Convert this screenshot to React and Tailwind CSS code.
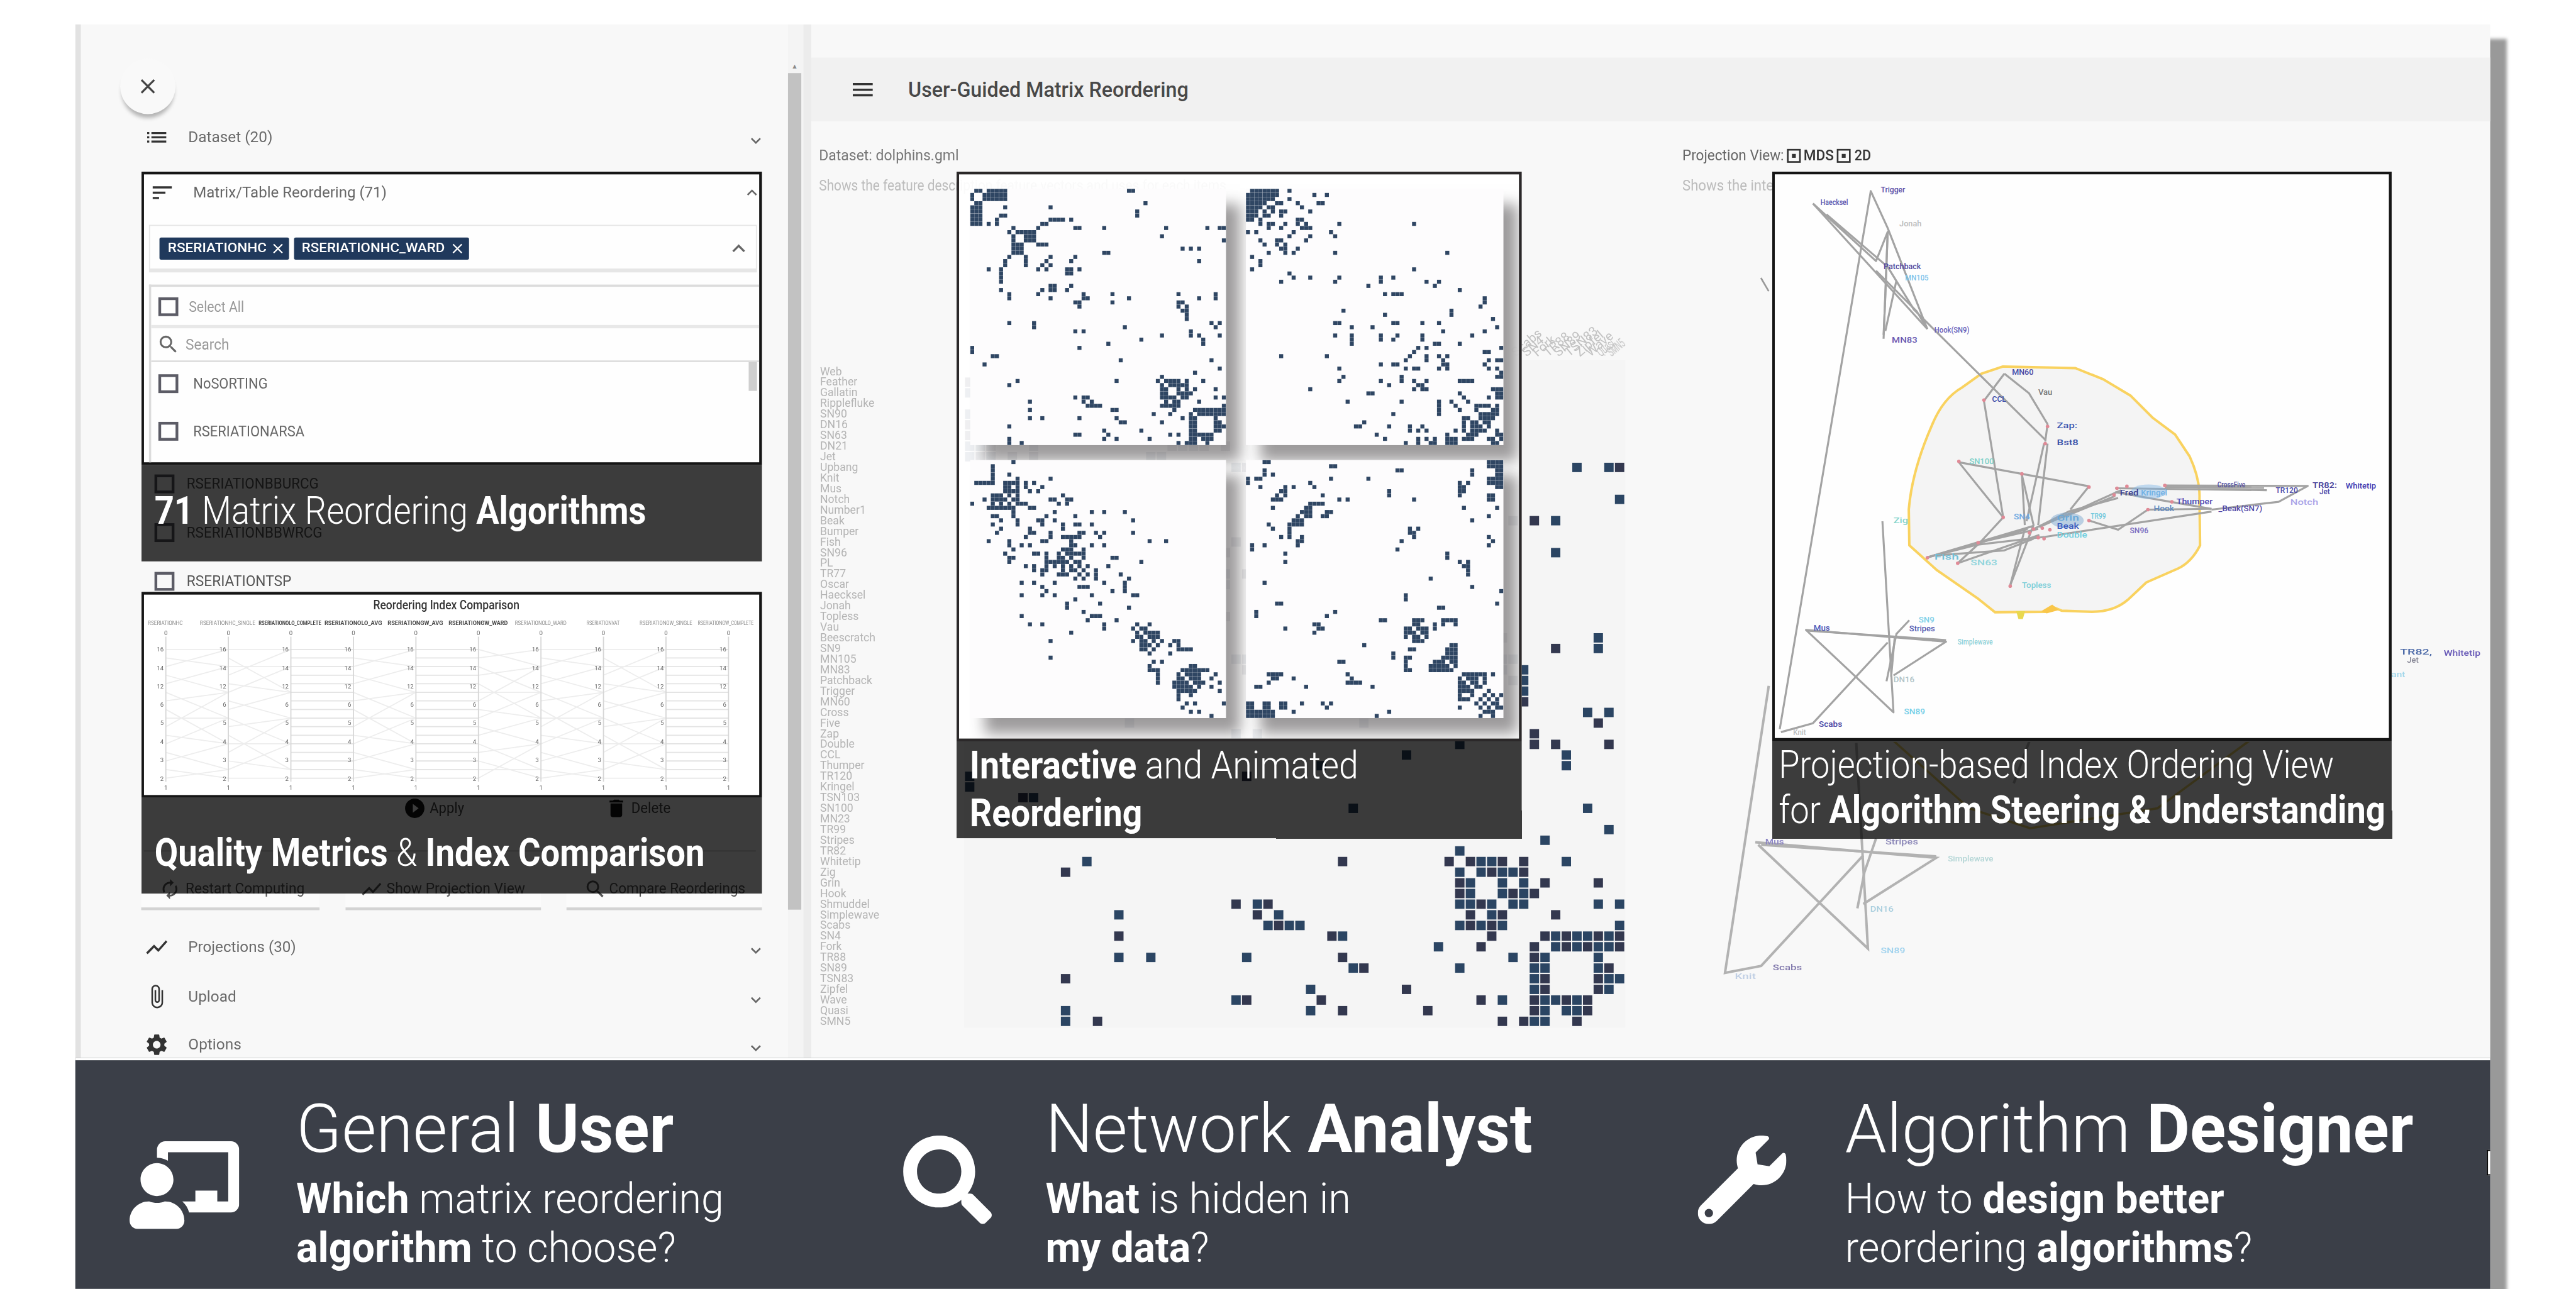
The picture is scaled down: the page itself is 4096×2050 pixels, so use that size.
import React, { useLayoutEffect, useRef, useState } from "react";
import { FaChalkboardTeacher, FaSearch, FaWrench } from "react-icons/fa";
import {
  MdClose, MdList, MdSort, MdSearch, MdPlayCircleFilled, MdDelete, MdAutorenew,
  MdShowChart, MdAttachFile, MdSettings, MdMenu, MdKeyboardArrowDown, MdKeyboardArrowUp,
} from "react-icons/md";

/* Single line of text condensed or expanded to an exact width. */
function Fit({ w, className = "", children }) {
  const ref = useRef(null);
  const [k, setK] = useState(1);
  useLayoutEffect(() => {
    setK(w / ref.current.offsetWidth);
  }, [w]);
  return (
    <span className={"block whitespace-nowrap " + className} style={{ width: w }}>
      <span ref={ref} className="inline-block origin-left" style={{ transform: `scaleX(${k})` }}>
        {children}
      </span>
    </span>
  );
}

/* ---------- adjacency matrices ---------- */
// "row:cols" entries; a-b is a range
const parse = (s) =>
  s.trim().split(/\s+/).flatMap((part) => {
    const [r, cs] = part.split(":");
    const span = (t) => {
      const [a, b] = t.split("-").map(Number);
      return Array.from({ length: (b ?? a) - a + 1 }, (_, i) => a + i);
    };
    return span(r).flatMap((row) => cs.split(",").flatMap(span).map((c) => [c, row]));
  });

const mirror = (cells) => {
  const seen = new Set();
  cells.forEach(([c, r]) => {
    seen.add(c * 62 + r);
    seen.add(r * 62 + c);
  });
  return [...seen].map((v) => [Math.floor(v / 62), v % 62]);
};

const A = mirror(parse(`
 1:0 2:0 3:1,2 4-8:0-2 8:4 7:6 8:6 19:4,7 20-22:7 24:7 17:8 18:8 16:9 10:9 25:9 26:9 32:9,15 47:9 46:11 57:9 60:9 61:9,12
 51:14 53:14 55:14,17 33:15 38:0 39:0 40:5,6 42:3 11:10 12:10,13 13:10-12 14:10-12 15:10-12 10:14 16-18:13 19:16 18:17 19:18
 25:16 24:17 23:19,20 24:19,20,23 26:19,27 27:25,26 28:26 34:25,27 38:26 50:25,27,28 51:27,29 52:28-31 37:33 41:36 46:35
 55:26 53:34,35 55:35 56:36,37 59:25,26 58:32 59:33 60:32,35 58:41 60:43
 9:60,61 12:61 14:53,55 17:55 28-31:52 60:58
 46:45,47-50,52,56 47:46,48-52 48:46,47,50,52,54,59 49:46,47,50-53 50:46-49,51,52,59,61 51:47,49,50,55 52:46-50,61
 53:49,54-61 54:44,48,53,55-61 55:51,53,54,59 56:46,53,54,59,60 57:53,54,59-61 58:53,54,59 59:48,50,53-58 60:53,54,56,57 61:50,52-54,57`));

const B = mirror(parse(`
 1:0,1 2-7:0,1 2-6:2 2-4:3 8:3,5,6 9:8 10:0,2,11 9:5 12:3,8 13:4,7 15:5 16:1 17:3 18:3 19:1 14:8,9 15:9,11 14:12 20:10 21:11,15
 22:8,21 5:4 6:4,5 7:3 12:7 13:9 40:8,19 48:15 43:22 46:22 45:23 51:24 32:21,22 35:21 33:25 35-37:25 23:29 33:30 35:32 36:32,35
 57:26,27 56:28 49:29,30 42:32,35,36 46:32 47:34 45:37 46:37 43:38 51:37 54:35 57:34 59:31 60:33 61:38 57:39 58:39,41 41:38
 40:39 43:40 46:40 48:40,42 47:41 57:42 60:41,43,45 61:41,44,45 58:43 51-54:46 41:43,47 43:46,48 42:47 40:48
 59-61:48 60:49,50 61:49,50 58:50 51:49 52:50 53:51 55-58:52 56-58:54 60:53,54 56-59:55 57:56 58:56,57 59:53 55:53,56,57 56:57
 54:58,59 55:58 52:60 60:59,58 61:60,59 53:60`));

const C = mirror(parse(`
 10:0 5:1-4 5:5 0:10 9:3,5-8 8:5,6 10:5,7 11:4-9 10:9,11 7:8,9 6:9 5:10 11:10 8:9 13:5,6,10 14:11,7 15:5,11 16:7,14 17:6,14,15 12:10
 19:4,9 20:9,12,14 21:10 22:8,15,16 23:9,10 24:9 18:13 25:13,15 26:15,17 19:17,18 29:12,15,20 32:12,17,20 30:17 31:18 37:12 39:14,17
 43:19 47:19 41:24 34:23 35:23 33:25 36:27 38:28 34:31 24:18-22 25:18 27:17 26:18 23:18,21,22 27:21-23 26:22,24 25:22,24 26:25 22:21
 28:25 27:26 24:23 30:27,28,26 32:29 27:30 37:29-31 39:32 40:32 38:35 21:24 20:25 28:27 18:22,23
 40:39 41:40 43:39,41,42 44:41-43 42:40 45:42,41 46:43 45:44 42:41 49:43 48:44,46 50:43,45,44 51-53:45
 53:49-52 54:49-51 52:50,51 55:50-54 54:53 51:50,52 52:53 51-53:54 56:53,50 57:50 59:51 58:52,54 60:53,55 61:58 53:60 55:60 58:61 52:58 51:59`));

const D = mirror(parse(`
 4:0,2,3 5:0 0:4,5 2:4 3:4,6 6:3 9:6,7 11:6 8:7,9 15:5,10-13 16:6,10 17:10 18:10,8,13 14:11-13 12:13,14 19:12,13 20:12,1 22:9 24:9 21:1
 20:4 29:4 34:7,8 36:2,21 37:2,19 40:9,17,18 39:16,17 41:16 44:28 48:22,23 51:24 52:25 53:24-27 54:30,2,3 51:5-8 52:6,7,11 53:5 54:14
 58-61:0,1 60:2,3 61:2,3 58:4,5 59:4,5 60:4-6 61:4-6 58:8,9,13,18,20 59:8,9,19 60:11,34 61:31 46:35 47:35 32:38 33:38 47-50:38 47:39 50:39
 45:39,40 40:38,39 41:38 42:38,41 43:40,42 41:40,43,39 42:40 49:44 50:44-49 48-50:45 48-50:46 47-50:47 49:48
 52-57:51 57:52,53,58 53:52,54 54:52 55:54,53,52 54:56 54:53 51:54-56 59:51,56 56:57 58:55 61:56 60:57,59 61:59 60:58 56:59,61 58:59`));

function Cells({ cells, size = 10, fill = "#2f4663" }) {
  return cells.map(([c, r]) => (
    <rect key={c + "-" + r} x={c * size} y={r * size} width={size - 0.3} height={size - 0.3} fill={fill} />
  ));
}

function MiniMatrix({ cells }) {
  return (
    <div className="h-full w-full bg-[#fdfcfd] shadow-[26px_28px_24px_rgba(60,55,58,0.5)]">
      <svg viewBox="0 0 620 620" preserveAspectRatio="none" className="block h-full w-full">
        <Cells cells={cells} />
      </svg>
    </div>
  );
}

const NAMES = `Web Feather Gallatin Ripplefluke SN90 DN16 SN63 DN21 Jet Upbang Knit Mus Notch Number1 Beak Bumper Fish SN96 PL TR77 Oscar Haecksel Jonah Topless Vau Beescratch SN9 MN105 MN83 Patchback Trigger MN60 Cross Five Zap Double CCL Thumper TR120 Kringel TSN103 SN100 MN23 TR99 Stripes TR82 Whitetip Zig Grin Hook Shmuddel Simplewave Scabs SN4 Fork TR88 SN89 TSN83 Zipfel Wave Quasi SMN5`.split(" ");

function BackgroundMatrix() {
  return (
    <svg viewBox="1480 560 1500 1320" className="block h-[1320px] w-[1500px] font-['Roboto']">
      <rect x="1742" y="650" width="1194" height="1206" fill="#f5f5f5" />
      <g fontSize="20" fill="#b4b4b4">
        {NAMES.map((n, i) => (
          <text key={n} x="1482" y={677.5 + i * 19.24}>{n}</text>
        ))}
      </g>
      <g fontSize="23" fill="#c2c2c2">
        {NAMES.map((n, i) =>
          i < 52 ? null : (
            <text key={n} transform={`translate(${1738 + i * 19.24} 645) rotate(-40)`} textLength={i > 59 ? 34 : undefined} lengthAdjust="spacingAndGlyphs">{n}</text>
          )
        )}
      </g>
      <g transform="translate(1742.5 661.5) scale(1.924)">
        {A.map(([c, r]) => (
          <rect key={c + "-" + r} x={c * 10 + 0.6} y={r * 10 + 0.6} width="8.8" height="8.8" fill={(c * 7 + r) % 5 < 2 ? "#33384f" : "#2b4563"} />
        ))}
      </g>
    </svg>
  );
}

/* ---------- parallel index comparison ---------- */
const AX = Array.from({ length: 10 }, (_, i) => 299.5 + i * 112.9);
const TICKS = [1173, 1206.5, 1239.5, 1272.5, 1306, 1339, 1373, 1406];
const HEADS = ["RSERIATIONHC", "RSERIATIONHC_SINGLE", "RSERIATIONOLO_COMPLETE", "RSERIATIONOLO_AVG", "RSERIATIONGW_AVG", "RSERIATIONGW_WARD", "RSERIATIONOLO_WARD", "RSERIATIONVAT", "RSERIATIONGW_SINGLE", "RSERIATIONGW_COMPLETE"];
const HEAD_X = [[267, 330], [361, 461], [467, 580], [586, 690], [700, 800], [810, 917], [930, 1023], [1059, 1119], [1155, 1250], [1260, 1361]];
const FLAT = [false, false, true, false, true, false, false, false, true];

function ParallelChart() {
  return (
    <svg viewBox="260 1074 1111 362" className="block h-[362px] w-[1111px] font-['Roboto']">
      <text x="806" y="1101" fontSize="24" fontWeight="500" fill="#333" textAnchor="middle" textLength="264" lengthAdjust="spacingAndGlyphs">Reordering Index Comparison</text>
      {HEADS.map((h, i) => (
        <text key={h} x={HEAD_X[i][0]} y="1129" fontSize="10.5" fontWeight={i > 1 && i < 6 ? 700 : 400} fill={i > 1 && i < 6 ? "#444" : "#888"} textLength={HEAD_X[i][1] - HEAD_X[i][0]} lengthAdjust="spacingAndGlyphs">{h}</text>
      ))}
      {FLAT.map((flat, i) =>
        Array.from({ length: 16 }, (_, j) => {
          const y = 1173 + j * 15.5;
          const shift = ((j * 5 + i * 3) % 9) - 4;
          const y2 = flat ? y : 1173 + Math.min(15, Math.max(0, j + shift)) * 15.5;
          return (
            <line key={i + "-" + j} x1={AX[i]} y1={y} x2={AX[i + 1]} y2={y2} stroke={flat ? "#e3e3e3" : "#ededed"} strokeWidth="2" />
          );
        })
      )}
      {AX.map((x, i) => (
        <g key={x}>
          <line x1={x} x2={x} y1="1150" y2="1412" stroke="#d6d6d6" strokeWidth="2" />
          <text x={x} y="1147" fontSize="11" fill="#666" textAnchor="middle">0</text>
          <text x={x} y="1427" fontSize="11" fill="#666" textAnchor="middle">1</text>
          {TICKS.map((y, j) => (
            <text key={y} x={x - 4} y={y + 4} fontSize="11" fill="#666" textAnchor="end">{j < 3 ? 16 - j * 2 : 9 - j}</text>
          ))}
        </g>
      ))}
    </svg>
  );
}

/* ---------- projection graph ---------- */
const P = (x, y) => [3000 + 1.0536 * x, 240 + 0.7015 * y];
const Q = (x, y) => [3000 + 1.0536 * x, 1300 + 0.3827 * y];
const poly = (f, list) => list.map((p) => f(p[0], p[1]).map((v) => v.toFixed(1)).join(",")).join(" ");

const LINES = [
  [[205, 1535], [361, 150], [390, 245], [458, 505]],
  [[262, 182], [370, 330], [390, 255], [383, 530]],
  [[262, 182], [458, 505]], [[285, 210], [390, 345], [435, 455], [660, 790]],
  [[390, 255], [386, 420], [383, 520]], [[405, 380], [386, 510]], [[370, 355], [440, 460], [458, 505]],
  [[590, 620], [555, 690], [588, 990]], [[590, 620], [632, 670], [664, 750], [660, 795]],
  [[658, 800], [628, 1000]], [[664, 800], [648, 1010]],
  [[512, 848], [588, 990], [548, 1055], [630, 1020]], [[512, 848], [620, 878], [735, 910], [703, 970]],
  [[620, 878], [625, 1010]], [[620, 880], [640, 1010], [600, 1165]], [[600, 1165], [625, 1020]],
  [[780, 935], [690, 990]], [[790, 920], [650, 1015]], [[785, 940], [700, 975], [640, 1020]],
  [[735, 998], [785, 1022], [836, 970], [945, 968]], [[945, 975], [660, 1040], [545, 1060], [458, 1093]],
  [[458, 1093], [640, 1012]], [[458, 1093], [560, 1050], [648, 1020]], [[510, 1108], [548, 1055]], [[510, 1108], [650, 1035]], [[470, 1088], [590, 1075], [640, 1045]],
  [[865, 908], [1110, 909], [1060, 950], [945, 970]], [[780, 915], [1040, 920]], [[780, 925], [875, 950], [945, 968]], [[865, 912], [1035, 914]],
  [[381, 1000], [400, 1492], [250, 1280], [490, 1310], [400, 1397]], [[255, 1282], [490, 1306]], [[427, 1255], [405, 1290], [388, 1412]],
  [[390, 1312], [262, 1520], [207, 1543]], [[402, 1300], [396, 1400]],
];
const LABELS = [
  ["Trigger", 378, 153, 42, "#5a50a8"], ["Haecksel", 275, 186, 47, "#5a50a8"], ["Jonah", 410, 240, 38, "#bbb"], ["Patchback", 383, 350, 64, "#4c48a0"],
  ["MN105", 420, 380, 40, "#79c4ec"], ["Hook(SN9)", 470, 514, 60, "#6a60b8"], ["MN83", 397, 540, 44, "#6a58b0"], ["MN60", 603, 622, 37, "#4a4aa4"],
  ["Vau", 648, 675, 24, "#777"], ["CCL", 569, 692, 24, "#3b4aa8"], ["Zap:", 680, 760, 35, "#3a55b0"], ["Bst8", 680, 804, 37, "#3a50a8"],
  ["SN100", 530, 852, 42, "#7ed0c8"], ["SN4", 606, 995, 28, "#6fa8e0"], ["Fred", 788, 934, 32, "#3b3d90"], ["Kringel", 824, 934, 45, "#6fb0e4"],
  ["Thumper", 885, 956, 62, "#4b48b4"], ["Hook", 846, 974, 35, "#6088c0"], ["Beak", 680, 1019, 38, "#3c5cc0"], ["Grin", 680, 998, 38, "#68a8d8"],
  ["Double", 680, 1042, 52, "#70cfe0"], ["SN96", 805, 1030, 32, "#7a6cc0"], ["TR99", 738, 994, 26, "#70c8dc"], ["Fish", 470, 1098, 42, "#6fc0d8"],
  ["SN63", 532, 1114, 46, "#90d4dc"], ["Topless", 620, 1171, 50, "#7fcfd8"], ["CrossFive", 955, 912, 48, "#5550a0"], ["TR120", 1055, 927, 38, "#4a48a8"],
  ["Jet", 1130, 930, 18, "#4a48a8"], ["TR82:", 1118, 914, 42, "#443c98"], ["Whitetip", 1175, 916, 52, "#443cb0"], ["Notch", 1080, 958, 48, "#a8a4e8"],
  ["_Beak(SN7)", 957, 974, 75, "#5048a8"], ["Zig", 400, 1005, 25, "#86d4cc"], ["SN9", 443, 1260, 27, "#80d0e8"], ["Stripes", 427, 1283, 44, "#5058b0"],
  ["Mus", 263, 1282, 28, "#5058b8"], ["DN16", 400, 1415, 36, "#b0c4c8"], ["Simplewave", 510, 1317, 60, "#8cd0d8"], ["SN89", 418, 1497, 36, "#74cfe8"],
  ["Scabs", 272, 1530, 40, "#4c48a4"], ["Knit", 228, 1550, 22, "#bbb"],
];
const DOTS = [[555, 688], [664, 756], [660, 800], [512, 846], [620, 878], [735, 912], [783, 915], [778, 932], [800, 910], [865, 908], [877, 950], [836, 970], [588, 990], [640, 1020], [655, 1018], [668, 1022], [633, 1030], [545, 1055], [648, 1042], [658, 1045], [735, 998], [510, 1108], [458, 1094], [600, 1167]];

const LASSO = "M3619 662 L3660 663 L3750 665 L3800 685 L3850 715 L3890 755 L3930 785 L3956 824 Q3975 865 3974 900 L3975 985 Q3960 1015 3935 1027 L3878 1052 L3845 1083 Q3820 1105 3780 1105 L3725 1103 L3708 1096 L3695 1105 L3605 1106 L3575 1082 L3500 1030 L3450 985 L3449 920 Q3455 850 3490 770 Q3510 720 3545 700 L3580 675 Z";

function Tag({ f, t }) {
  const [x, y] = f(t[1], t[2]);
  return (
    <text x={x} y={y} fontSize="14.5" fontWeight="500" fill={t[4]} textLength={t[3] * 1.0536} lengthAdjust="spacingAndGlyphs">{t[0]}</text>
  );
}

function ProjectionGraph() {
  return (
    <svg viewBox="3207 315 1109 1018" className="block h-[1018px] w-[1109px] font-['Roboto']">
      <path d={LASSO} fill="#f4f4f4" stroke="#f9d25f" strokeWidth="4.5" strokeLinejoin="round" />
      <path d="M3643 1104h16l-4 14h-8z" fill="#e9d84e" />
      <path d="M3688 1104l20-12 12 10-22 6z" fill="#f9c64a" />
      {LINES.map((l, i) => (
        <polyline key={i} points={poly(P, l)} fill="none" stroke="#a3a3a3" strokeWidth="3.6" strokeLinejoin="round" />
      ))}
      <ellipse cx="3735" cy="940" rx="30" ry="14" fill="#7fa9cf" opacity=".5" />
      <ellipse cx="3882" cy="888" rx="32" ry="13" fill="#7fb6e6" opacity=".45" />
      {DOTS.map(([x, y], i) => {
        const p = P(x, y);
        return <circle key={i} cx={p[0]} cy={p[1]} r="3.2" fill="#e08a96" />;
      })}
      {LABELS.map((t) => <Tag key={t[0]} f={P} t={t} />)}
    </svg>
  );
}

const BACK_LINES = [
  [[188, -160], [113, 1195], [175, 1162], [350, 640]], [[165, 578], [475, 652], [350, 870]], [[175, 590], [475, 645]],
  [[170, 590], [358, 1080], [338, 110]], [[372, 560], [352, 720], [340, 890]], [[635, 100], [608, 300]],
];
const BACK_TAGS = [
  ["Mus", 182, 590, 32, "#8a83c4"], ["Stripes", 388, 588, 56, "#8c88b8"], ["Simplewave", 495, 670, 78, "#b4d6d6"], ["DN16", 362, 905, 40, "#a8cede"],
  ["SN89", 380, 1102, 42, "#9fd2ee"], ["Scabs", 195, 1182, 50, "#8078ac"], ["Knit", 130, 1225, 36, "#c0cfe4"],
];

function BackgroundGraph() {
  return (
    <svg viewBox="3000 420 1496 1480" className="block h-[1480px] w-[1496px] font-['Roboto']">
      <path d="M3184 502l14 24" stroke="#999" strokeWidth="3" />
      {BACK_LINES.map((l, i) => (
        <polyline key={i} points={poly(Q, l)} fill="none" stroke="#b2b2b2" strokeWidth="4.5" />
      ))}
      <path d="M3420 1335L3560 1460L3670 1496L3900 1460L4070 1335" fill="none" stroke="#e9cf6a" strokeWidth="4" />
      {BACK_TAGS.map((t) => <Tag key={t[0]} f={Q} t={t} />)}
      {[["TR82,", 1270, 1344, 55, "#4c6aa8"], ["Whitetip", 1345, 1346, 63, "#6a5cb8"], ["Jet", 1282, 1364, 20, "#8a8a98"], ["ant", 1255, 1402, 24, "#9fd6ea"]].map((t) => (
        <Tag key={t[0]} f={P} t={t} />
      ))}
    </svg>
  );
}

/* ---------- sidebar ---------- */
function Section({ icon: Icon, label, w, h }) {
  return (
    <div className={"flex shrink-0 items-center " + h}>
      <div className="ml-[124px] w-[80px] text-[46px] text-[#333]"><Icon /></div>
      <Fit w={w} className="text-[28px] text-[#6a6a6a]">{label}</Fit>
      <MdKeyboardArrowDown className="mr-[40px] ml-auto mt-3 text-[36px] text-[#666]" />
    </div>
  );
}

function Box() {
  return <span className="block h-[34px] w-[36px] shrink-0 border-[5px] border-[#5c5c66]" />;
}

function Option({ label, w }) {
  return (
    <div className="flex h-[88px] shrink-0 items-center pl-[143px]">
      <Box />
      <Fit w={w} className="ml-[22px] text-[28px] text-[#555]">{label}</Fit>
    </div>
  );
}

function Sidebar() {
  return (
    <div className="flex h-full w-[1287px] shrink-0 flex-col overflow-hidden border-l-[10px] border-[#e2e2e2] pl-0 [&>*]:-ml-[10px]">
      <div className="mt-[62px] flex h-[100px] shrink-0 pl-[81px]">
        <div className="flex h-[100px] w-[100px] items-center justify-center rounded-full bg-[#f9f9f9] text-[44px] text-[#444] shadow-[0_10px_7px_-3px_rgba(0,0,0,0.28)]">
          <MdClose />
        </div>
      </div>
      <Section icon={MdList} label="Dataset (20)" w={152} h="h-[84px]" />
      <div className="h-[540px] shrink-0" />
      <Option label="RSERIATIONBBURCG" w={239} />
      <Option label="RSERIATIONBBWRCG" w={245} />
      <Option label="RSERIATIONTSP" w={189} />
      <div className="h-[336px] shrink-0" />
      <div className="flex h-[60px] shrink-0 items-center pl-[592px] text-[27px] text-[#444]">
        <MdPlayCircleFilled className="text-[42px] text-[#111]" />
        <Fit w={62} className="ml-[6px]">Apply</Fit>
        <MdDelete className="ml-[254px] text-[42px] text-[#111]" />
        <Fit w={71} className="ml-[6px]">Delete</Fit>
      </div>
      <div className="flex h-[48px] shrink-0 pl-[124px]">
        <div className="w-[1105px] border-b-2 border-[#ccc]" />
      </div>
      <div className="mt-[34px] flex h-[72px] shrink-0 pl-[119px] text-[27px] text-[#555]">
        <div className="flex w-[322px] items-center border-b-[5px] border-[#d3d3d3] bg-[#fbfbfb] pl-[32px]">
          <MdAutorenew className="mr-[8px] text-[40px]" /><Fit w={215}>Restart Computing</Fit>
        </div>
        <div className="ml-[47px] flex w-[353px] items-center border-b-[5px] border-[#d3d3d3] bg-[#fbfbfb] pl-[26px]">
          <MdShowChart className="mr-[6px] text-[42px]" /><Fit w={250}>Show Projection View</Fit>
        </div>
        <div className="ml-[46px] flex w-[353px] items-center border-b-[5px] border-[#d3d3d3] bg-[#fbfbfb] pl-[31px]">
          <MdSearch className="mr-[4px] text-[42px]" /><Fit w={246}>Compare Reorderings</Fit>
        </div>
      </div>
      <div className="h-[22px] shrink-0" />
      <Section icon={MdShowChart} label="Projections (30)" w={195} h="h-[89px]" />
      <Section icon={MdAttachFile} label="Upload" w={87} h="h-[89px]" />
      <Section icon={MdSettings} label="Options" w={96} h="h-[86px]" />
    </div>
  );
}

function Scrollbar() {
  return (
    <div className="flex h-full w-[42px] shrink-0 border-r-[14px] border-[#ececec] bg-[#f4f4f4]">
      <div className="flex w-[24px] flex-col">
        <div className="mt-[64px] flex h-[24px] items-center justify-center text-[12px] text-[#888]">▲</div>
        <div className="h-[1511px] bg-[#c2c2c2]" />
      </div>
    </div>
  );
}

function Radio() {
  return (
    <span className="flex h-[25px] w-[25px] items-center justify-center border-[3px] border-[#333]">
      <span className="h-[7px] w-[7px] bg-[#333]" />
    </span>
  );
}

function Workspace() {
  return (
    <div className="flex h-full w-[3033px] flex-col">
      <div className="mt-[60px] flex h-[115px] shrink-0 items-center bg-[#f1f1f1] pl-[69px]">
        <MdMenu className="text-[48px] text-[#333]" />
        <Fit w={506} className="ml-[58px] pt-[2px] text-[37px] font-medium text-[#484848]">User-Guided Matrix Reordering</Fit>
      </div>
      <div className="flex">
        <div className="w-[1534px] pl-[14px]">
          <Fit w={252} className="mt-[42px] h-[40px] text-[27px] leading-[40px] text-[#777]">Dataset: dolphins.gml</Fit>
          <Fit w={735} className="mt-[14px] h-[40px] text-[27px] leading-[40px] text-[#bcbcbc]">Shows the feature description feature vectors and uses for each items</Fit>
          <div className="mt-[205px]"><BackgroundMatrix /></div>
        </div>
        <div className="w-[1499px]">
          <div className="mt-[42px] flex h-[40px] items-center gap-[5px] pl-[39px] text-[27px] font-medium text-[#333]">
            <Fit w={184} className="font-normal text-[#666]">Projection View:</Fit>
            <Radio /><Fit w={55}>MDS</Fit>
            <span><Radio /></span><Fit w={30} className="ml-[2px]">2D</Fit>
          </div>
          <Fit w={240} className="mt-[14px] ml-[39px] h-[40px] text-[27px] leading-[40px] text-[#bcbcbc]">Shows the interactive</Fit>
          <div className="-ml-[3px] mt-[65px]"><BackgroundGraph /></div>
        </div>
      </div>
    </div>
  );
}

/* ---------- highlighted panels ---------- */
function AlgorithmsPanel() {
  return (
    <div className="absolute top-[310px] left-[255px] flex h-[704px] w-[1121px] flex-col text-[28px] text-[#666]">
      <div className="flex h-[530px] flex-col overflow-hidden border-[5px] border-[#151515] bg-[#fefefe] [&>*]:shrink-0">
        <div className="flex h-[66px] items-center pl-[10px]">
          <MdSort className="text-[46px] text-[#333]" />
          <Fit w={349} className="ml-[33px]">Matrix/Table Reordering (71)</Fit>
          <MdKeyboardArrowUp className="-mr-[5px] ml-auto text-[36px]" />
        </div>
        <div className="mt-[25px] ml-[9px] flex h-[86px] w-[1098px] items-center gap-[9px] border-2 border-b-[7px] border-[#e6e6e6] pr-[8px] pl-[17px] pt-[4px] text-[23px] font-medium text-white">
          <span className="flex h-[40px] w-[234px] items-center rounded-[3px] bg-[#20395c] pl-[15px]"><Fit w={178}>RSERIATIONHC</Fit><MdClose className="ml-[6px] text-[30px]" /></span>
          <span className="flex h-[40px] w-[316px] items-center rounded-[3px] bg-[#20395c] pl-[14px]"><Fit w={258}>RSERIATIONHC_WARD</Fit><MdClose className="ml-[8px] text-[30px]" /></span>
          <MdKeyboardArrowUp className="ml-auto text-[46px] text-[#666]" />
        </div>
        <div className="mt-[22px] ml-[9px] w-[1102px] border-t-4 border-l-[4px] border-[#dcdcdc]">
          <div className="flex h-[75px] items-center border-b-[6px] border-[#e8e8e8] pt-[2px] pl-[13px]">
            <Box /><Fit w={100} className="ml-[19px] text-[#999]">Select All</Fit>
          </div>
          <div className="flex h-[61px] items-center border-b-[3px] border-[#dcdcdc] pl-[10px]">
            <MdSearch className="text-[42px]" /><Fit w={79} className="ml-[10px] text-[#999]">Search</Fit>
          </div>
          <div className="flex h-[200px] justify-between">
            <div>
              <div className="mt-[3px] flex h-[72px] items-center pl-[13px]"><Box /><Fit w={134} className="ml-[27px]">NoSORTING</Fit></div>
              <div className="mt-[14px] flex h-[72px] items-center pl-[13px]"><Box /><Fit w={201} className="ml-[27px]">RSERIATIONARSA</Fit></div>
            </div>
            <div className="mr-[4px] h-[52px] w-[15px] bg-[#cfcfcf]" />
          </div>
        </div>
      </div>
      <div className="h-[174px] bg-black/76 pl-[24px] text-white">
        <Fit w={888} className="h-[164px] text-[70px] leading-[164px] font-light"><b className="font-bold">71</b> Matrix Reordering <b className="font-bold">Algorithms</b></Fit>
      </div>
    </div>
  );
}

function MetricsPanel() {
  return (
    <div className="absolute top-[1069px] left-[255px] flex h-[545px] w-[1121px] flex-col">
      <div className="h-[372px] border-[5px] border-[#151515] bg-white"><ParallelChart /></div>
      <div className="h-[173px] bg-black/76 pl-[24px] text-white">
        <Fit w={993} className="h-[198px] text-[70px] leading-[198px] font-light"><b className="font-bold">Quality Metrics</b> &amp; <b className="font-bold">Index Comparison</b></Fit>
      </div>
    </div>
  );
}

function MatrixPanel() {
  return (
    <div className="absolute top-[310px] left-[1727px] flex h-[1204px] w-[1021px] flex-col">
      <div className="grid h-[1029px] grid-cols-[462px_465px] grid-rows-[463px_466px] gap-x-[36px] gap-y-[27px] overflow-hidden border-[5px] border-[#2b2829] bg-white/92 pt-[26px] pl-[20px]">
        <MiniMatrix cells={A} />
        <MiniMatrix cells={B} />
        <MiniMatrix cells={C} />
        <MiniMatrix cells={D} />
      </div>
      <div className="h-[175px] bg-black/76 pl-[24px] text-[70px] leading-[86px] font-light text-white">
        <Fit w={702} className="h-[86px]"><b className="font-bold">Interactive</b> and Animated</Fit>
        <Fit w={312} className="h-[86px]"><b className="font-bold">Reordering</b></Fit>
      </div>
    </div>
  );
}

function ProjectionPanel() {
  return (
    <div className="absolute top-[310px] left-[3200px] flex h-[1204px] w-[1119px] flex-col">
      <div className="h-[1030px] border-[5px] border-b-[7px] border-[#151515] bg-[#fefefe]"><ProjectionGraph /></div>
      <div className="h-[174px] bg-black/76 pl-[12px] text-[70px] leading-[82px] font-light text-white">
        <Fit w={1003} className="h-[82px]">Projection-based Index Ordering View</Fit>
        <Fit w={1096} className="h-[82px]">for <b className="font-bold">Algorithm Steering &amp; Understanding</b></Fit>
      </div>
    </div>
  );
}

/* ---------- audience footer ---------- */
function Persona({ icon, title, lines }) {
  return (
    <div className="flex">
      {icon}
      <div className="pt-[58px] font-light">
        <Fit w={title[0]} className="h-[134px] text-[122px] leading-[134px]">{title[1]}</Fit>
        <Fit w={lines[0][0]} className="mt-[14px] h-[88px] text-[75px] leading-[88px]">{lines[0][1]}</Fit>
        <Fit w={lines[1][0]} className="h-[88px] text-[75px] leading-[88px]">{lines[1][1]}</Fit>
      </div>
    </div>
  );
}

const Strong = ({ children }) => <b className="font-bold">{children}</b>;

function Footer() {
  return (
    <div className="relative flex h-[417px] shrink-0 border-t-[4px] border-white bg-[#3b3f48] text-white">
      <div className="w-[1495px] pl-[98px]">
        <Persona
          icon={<FaChalkboardTeacher className="mt-[146px] mr-[103px] h-[159px] w-[198px]" />}
          title={[682, <>General <Strong>User</Strong></>]}
          lines={[[772, <><Strong>Which</Strong> matrix reordering</>], [686, <><Strong>algorithm</Strong> to choose?</>]]}
        />
      </div>
      <div className="w-[1435px]">
        <Persona
          icon={<FaSearch className="mt-[136px] mr-[97px] h-[160px] w-[160px]" />}
          title={[879, <>Network <Strong>Analyst</Strong></>]}
          lines={[[551, <><Strong>What</Strong> is hidden in</>], [295, <><Strong>my data</Strong>?</>]]}
        />
      </div>
      <div>
        <Persona
          icon={<FaWrench className="mt-[136px] mr-[106px] h-[160px] w-[160px]" />}
          title={[1026, <>Algorithm <Strong>Designer</Strong></>]}
          lines={[[685, <>How to <Strong>design better</Strong></>], [735, <>reordering <Strong>algorithms</Strong>?</>]]}
        />
      </div>
      <div className="absolute top-[162px] right-0 h-[46px] w-[6px] border-2 border-r-0 border-black bg-white" />
    </div>
  );
}

export default function App() {
  return (
    <div className="h-[2050px] w-[4096px] overflow-hidden bg-white">
      <div className="relative h-[2330px] w-[4652px] origin-top-left scale-[0.8805] overflow-hidden pt-[44px] pl-[136px] font-['Roboto',sans-serif]">
        <div className="flex h-[2360px] w-[4361px] flex-col bg-[#f8f8f8] shadow-[32px_24px_6px_-2px_#999]">
          <div className="flex h-[1867px] shrink-0 overflow-hidden">
            <Sidebar />
            <Scrollbar />
            <Workspace />
          </div>
          <Footer />
        </div>
        <AlgorithmsPanel />
        <MetricsPanel />
        <MatrixPanel />
        <ProjectionPanel />
      </div>
    </div>
  );
}
